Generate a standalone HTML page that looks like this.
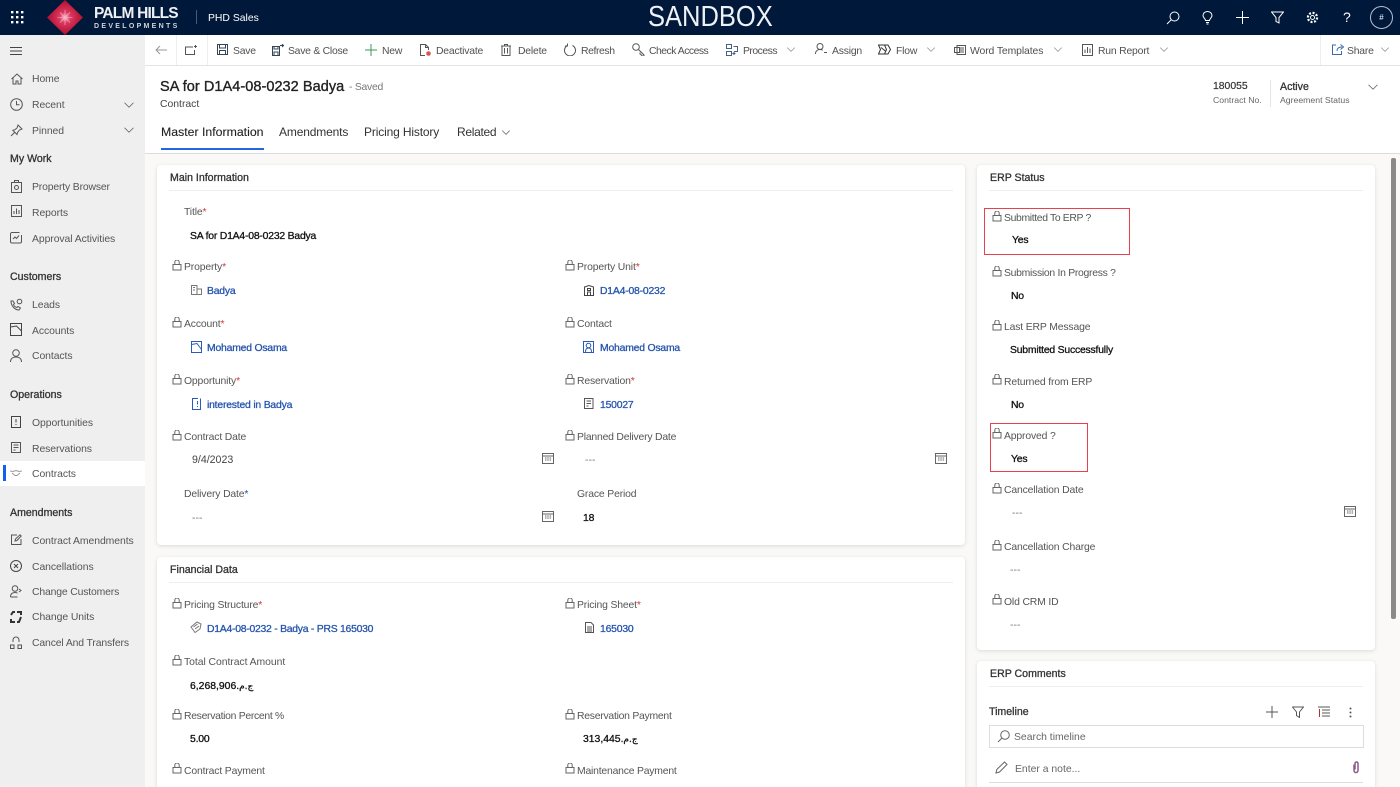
<!DOCTYPE html>
<html lang="en"><head><meta charset="utf-8"><title>SA for D1A4-08-0232 Badya - Contract</title>
<style>
html,body{margin:0;padding:0;width:1400px;height:787px;overflow:hidden;background:#faf9f8;font-family:"Liberation Sans",sans-serif;color:#333}
#p{position:relative;width:1400px;height:787px;overflow:hidden;background:#faf9f8}
.a,.t,svg.i{position:absolute}
.t{white-space:nowrap;line-height:14px;font-size:10.5px;margin-top:1px}
svg.i{fill:none;stroke:#555;stroke-width:1}
.nav{color:#555;left:32px;font-size:10.4px;letter-spacing:-.06px;margin-top:2px}
.sec{color:#333;left:10px;font-size:10.6px;-webkit-text-stroke:.3px #333}
.cmd{color:#505050;font-size:10.4px;letter-spacing:-.2px;margin-top:2px}
.lb{color:#555;font-size:10.4px;letter-spacing:-.15px;margin-top:2px}
.lb b{color:#d13438;font-weight:normal}
.v{color:#111;font-size:10.4px;-webkit-text-stroke:.3px #111;letter-spacing:-.2px;margin-top:2px}
.l{color:#2655ad;font-size:10.4px;-webkit-text-stroke:.3px #2655ad;letter-spacing:-.2px;margin-top:2px}
.h{color:#333;font-size:10.6px;-webkit-text-stroke:.3px #333}
.tab{font-size:12px;color:#333;letter-spacing:-.15px}
.card{position:absolute;background:#fff;border-radius:4px;box-shadow:0 1px 4px rgba(0,0,0,.13)}
.rule{position:absolute;height:1px;background:#eeeeee}
.red{position:absolute;border:1px solid #e8404f;box-sizing:border-box}
</style></head><body><div id="p">
<svg width="0" height="0" style="position:absolute"><defs>
<symbol id="lock" viewBox="0 1 10 12"><path d="M1 5.500h8v5.500H1zM2.800 5.500V3.200a2.200 2.200 0 0 1 4.400 0v2.300"/></symbol>
<symbol id="chev" viewBox="0 0 14 8"><path d="M1 1l6 6 6-6"/></symbol>
<symbol id="cal" viewBox="0 0 12 12"><path d="M.5 1.500h11v10H.500zM.5 4h11M3 6h1.500M5.300 6h1.500M7.600 6h1.500M3 8h1.500M5.300 8h1.500M7.600 8h1.500"/></symbol>
</defs></svg>

<!-- top bar -->
<div class="a" style="left:0;top:0;width:1400px;height:35px;background:#00183a"></div>
<svg class="i" style="left:11px;top:11px;stroke:none;fill:#fff" width="13" height="13" viewBox="0 0 13 13"><path d="M0 0h2.400v2.400H0zM5 0h2.400v2.400H5zM10 0h2.400v2.400H10zM0 5h2.400v2.400H0zM5 5h2.400v2.400H5zM10 5h2.400v2.400H10zM0 10h2.400v2.400H0zM5 10h2.400v2.400H5zM10 10h2.400v2.400H10z"/></svg>
<svg class="i" style="left:47px;top:0;stroke:none" width="36" height="35" viewBox="0 0 36 35"><defs><radialGradient id="g"><stop offset="0" stop-color="#f7c6d4"/><stop offset=".3" stop-color="#dc3a63"/><stop offset=".7" stop-color="#c41f42"/><stop offset="1" stop-color="#a9152f"/></radialGradient></defs><path fill="url(#g)" d="M18 0l18 17.500L18 35 0 17.500z"/><path stroke="#f6b6c8" stroke-width=".6" d="M18 10v15M10.500 17.500h15M13 12.500l10 10M23 12.500l-10 10"/></svg>
<div class="t" style="left:94px;top:5px;font-size:15.5px;line-height:16px;color:#eef0f4;font-weight:bold;letter-spacing:-.8px">PALM HILLS</div>
<div class="t" style="left:94px;top:21px;font-size:7px;line-height:9px;color:#cfd3da;font-weight:bold;letter-spacing:2.300px">DEVELOPMENTS</div>
<div class="a" style="left:196px;top:10px;width:1px;height:14px;background:#4a5a74"></div>
<div class="t" style="left:208px;top:11px;color:#fff;font-size:10.4px">PHD Sales</div>
<div class="t" style="left:648px;top:0;font-size:29px;line-height:33px;color:#eef1f5;transform:scaleX(.88);transform-origin:left">SANDBOX</div>
<svg class="i" style="left:1166px;top:11px;stroke:#fff" width="14" height="14" viewBox="0 0 14 14"><circle cx="8.500" cy="5.500" r="4.500"/><path d="M5.300 8.700L1 13"/></svg>
<svg class="i" style="left:1202px;top:11px;stroke:#fff" width="11" height="14" viewBox="0 0 11 14"><path d="M3.500 9.500C3.500 7.500 1 7 1 4.500a4.500 4 0 0 1 9 0C10 7 7.500 7.500 7.500 9.500zM4 11.500h3M4.500 13h2"/></svg>
<svg class="i" style="left:1236px;top:11px;stroke:#fff" width="13" height="13" viewBox="0 0 13 13"><path d="M6.500 0v13M0 6.500h13"/></svg>
<svg class="i" style="left:1271px;top:11px;stroke:#fff" width="13" height="13" viewBox="0 0 13 13"><path d="M.5 1h12L8 6.500V12L5 10.500v-4z"/></svg>
<svg class="i" style="left:1306px;top:11px;stroke:#fff" width="13" height="13" viewBox="0 0 13 13"><circle cx="6.500" cy="6.500" r="2"/><circle cx="6.500" cy="6.500" r="4.600" stroke-width="2.200" stroke-dasharray="2 1.600"/></svg>
<div class="t" style="left:1343px;top:9px;color:#fff;font-size:14px;line-height:15px">?</div>
<div class="a" style="left:1370px;top:6px;width:21px;height:21px;border:1px solid #b8c0cc;border-radius:50%;color:#fff;font-size:8px;line-height:21px;text-align:center">#</div>

<!-- sidebar -->
<div class="a" style="left:0;top:35px;width:145px;height:752px;background:#efefef"></div>
<svg class="i" style="left:10px;top:47px;stroke:#444" width="12" height="8" viewBox="0 0 12 8"><path d="M0 .5h12M0 4h12M0 7.500h12"/></svg>
<svg class="i" style="left:11px;top:73px" width="12" height="12" viewBox="0 0 12 12"><path d="M.5 6L6 1l5.500 5M2 5v6h3V8h2v3h3V5"/></svg>
<div class="t nav" style="top:71px">Home</div>
<svg class="i" style="left:10px;top:98px" width="13" height="13" viewBox="0 0 13 13"><circle cx="6.500" cy="6.500" r="5.800"/><path d="M6.500 3v3.800h3"/></svg>
<div class="t nav" style="top:97px">Recent</div>
<svg class="i" style="left:123px;top:102px" width="12" height="6"><use href="#chev"/></svg>
<svg class="i" style="left:10px;top:124px" width="13" height="13" viewBox="0 0 13 13"><path d="M8 1l4 4-2.500 1-2 2.500-.5 2L2.800 6.300l2-.5L7 4zM4.500 8.500L1 12"/></svg>
<div class="t nav" style="top:123px">Pinned</div>
<svg class="i" style="left:123px;top:127px" width="12" height="6"><use href="#chev"/></svg>
<div class="t sec" style="top:151px">My Work</div>
<svg class="i" style="left:11px;top:180px" width="11" height="13" viewBox="0 0 11 13"><path d="M.5 2.500h10v10H.500zM3.500 2.500V.5h4v2"/><circle cx="5.500" cy="7.500" r="2"/></svg>
<div class="t nav" style="top:179px;letter-spacing:-.15px">Property Browser</div>
<svg class="i" style="left:10px;top:205px" width="13" height="12" viewBox="0 0 13 12"><path d="M1.500.5h10v11h-10zM4 9V6M6.500 9V3.500M9 9V5"/></svg>
<div class="t nav" style="top:205px">Reports</div>
<svg class="i" style="left:10px;top:231px" width="13" height="13" viewBox="0 0 13 13"><path d="M9.500 1.500H2a1.500 1.500 0 0 0-1.500 1.500v7.500A1.500 1.500 0 0 0 2 12h8a1.500 1.500 0 0 0 1.500-1.500V4M3 8l2-2 1.500 1.500L9 4.500"/></svg>
<div class="t nav" style="top:231px">Approval Activities</div>
<div class="t sec" style="top:269px">Customers</div>
<svg class="i" style="left:10px;top:298px" width="13" height="13" viewBox="0 0 13 13"><path d="M1 3c0 5 4 9 8 9l1.500-2-2.500-1.500-1 1C5 9 4 8 3.500 6.500l1-1L3 3z"/><circle cx="9.500" cy="3.500" r="2.300"/></svg>
<div class="t nav" style="top:297px">Leads</div>
<svg class="i" style="left:10px;top:323px;stroke:#444" width="12" height="13" viewBox="0 0 12 13"><path d="M.5.500h11v12H.500zM.5 4l6-1 5 5"/></svg>
<div class="t nav" style="top:323px">Accounts</div>
<svg class="i" style="left:10px;top:349px" width="12" height="13" viewBox="0 0 12 13"><circle cx="6" cy="4" r="3.300"/><path d="M.5 13c0-3 2-5 5.500-5s5.500 2 5.500 5"/></svg>
<div class="t nav" style="top:348px">Contacts</div>
<div class="t sec" style="top:387px">Operations</div>
<svg class="i" style="left:11px;top:416px;stroke:#444" width="10" height="12" viewBox="0 0 10 12"><path d="M.5.500h9v11h-9zM5 3v3.500M5 8v1"/></svg>
<div class="t nav" style="top:415px">Opportunities</div>
<svg class="i" style="left:11px;top:442px" width="11" height="11" viewBox="0 0 11 11"><path d="M.5.500h9v10h-9zM2.500 3h5M2.500 5.500h5M2.500 8h2"/></svg>
<div class="t nav" style="top:441px">Reservations</div>
<div class="a" style="left:0;top:461px;width:145px;height:25px;background:#fff"></div>
<div class="a" style="left:3px;top:465px;width:2.500px;height:16px;background:#1160f0"></div>
<svg class="i" style="left:10px;top:470px;stroke:#999" width="12" height="6" viewBox="0 0 12 6"><path d="M0 1l3 .5 3-1 3 1 3-.5M2 3l3 2.500h2L10 3"/></svg>
<div class="t nav" style="top:466px">Contracts</div>
<div class="t sec" style="top:505px">Amendments</div>
<svg class="i" style="left:11px;top:534px" width="11" height="11" viewBox="0 0 11 11"><path d="M6 1H.5v9.500H10V5M4 7l.5-2L9 .8l1.200 1.200-4.200 4.500z"/></svg>
<div class="t nav" style="top:533px">Contract Amendments</div>
<svg class="i" style="left:10px;top:560px;stroke:#444" width="12" height="12" viewBox="0 0 12 12"><circle cx="6" cy="6" r="5.500"/><path d="M4 4l4 4M8 4l-4 4"/></svg>
<div class="t nav" style="top:559px">Cancellations</div>
<svg class="i" style="left:10px;top:585px" width="12" height="13" viewBox="0 0 12 13"><circle cx="5" cy="3.500" r="2.800"/><path d="M.5 12c0-3 1.500-4.500 4.500-4.500 1 0 2 .2 2.500.8M.5 12h7M9 4l2 1.500L9 7"/></svg>
<div class="t nav" style="top:584px;letter-spacing:-.15px">Change Customers</div>
<svg class="i" style="left:10px;top:611px;stroke:#333;stroke-width:2" width="12" height="12" viewBox="0 0 12 12"><path d="M5 1H3L1 4M7 1h4v3M11 6L9 11H7M5 11H1V8"/></svg>
<div class="t nav" style="top:609px">Change Units</div>
<svg class="i" style="left:10px;top:636px" width="12" height="13" viewBox="0 0 12 13"><path d="M3 6V4a3 3 0 0 1 6 0v2M.5 12.500V9h3.500v3.500zM8 12.500V9h3.500v3.500z"/></svg>
<div class="t nav" style="top:635px;letter-spacing:-.12px">Cancel And Transfers</div>

<!-- command bar -->
<div class="a" style="left:145px;top:35px;width:1255px;height:30px;background:#fff;border-bottom:1px solid #e3e3e3"></div>
<div class="a" style="left:176px;top:35px;width:1px;height:30px;background:#eee"></div>
<div class="a" style="left:207px;top:35px;width:1px;height:30px;background:#eee"></div>
<div class="a" style="left:1320px;top:35px;width:1px;height:30px;background:#eee"></div>
<svg class="i" style="left:155px;top:45px;stroke:#999" width="12" height="10" viewBox="0 0 12 10"><path d="M12 5H1M5 1L1 5l4 4"/></svg>
<svg class="i" style="left:185px;top:45px" width="12" height="10" viewBox="0 0 12 10"><path d="M8 2H.5v7.500h9V5M10.500 0v3M9 1.500h3"/></svg>
<svg class="i" style="left:217px;top:44px;stroke:#345" width="11" height="11" viewBox="0 0 11 11"><path d="M.5.500h10v10h-10zM2.500.5v3.500h6V.5M2.500 10.500V6.500h6v4" /></svg>
<div class="t cmd" style="left:233px;top:43px">Save</div>
<svg class="i" style="left:272px;top:44px;stroke:#345" width="12" height="12" viewBox="0 0 12 12"><path d="M.5 2.500h7v9h-7zM2 2.500V5h4V2.500M2 11.500V8h4v3.500M8 1.500h3.500M10 0l1.500 1.500L10 3"/></svg>
<div class="t cmd" style="left:288px;top:43px;letter-spacing:-.25px">Save &amp; Close</div>
<svg class="i" style="left:365px;top:44px;stroke:#3c9a55" width="12" height="12" viewBox="0 0 12 12"><path d="M6 0v12M0 6h12"/></svg>
<div class="t cmd" style="left:382px;top:43px">New</div>
<svg class="i" style="left:420px;top:44px" width="11" height="12" viewBox="0 0 11 12"><path d="M5 11.500H.5V.5h5l3 3V6M5.500.5v3h3"/><circle cx="8.500" cy="9.500" r="2.300" fill="#d9534f" stroke="none"/></svg>
<div class="t cmd" style="left:436px;top:43px">Deactivate</div>
<svg class="i" style="left:501px;top:44px" width="10" height="12" viewBox="0 0 10 12"><path d="M0 2h10M3.500 2V.5h3V2M1 2v9.500h8V2M3.500 4v5.500M6.500 4v5.500"/></svg>
<div class="t cmd" style="left:518px;top:43px">Delete</div>
<svg class="i" style="left:564px;top:43px" width="12" height="13" viewBox="0 0 12 13"><path d="M3.500 2.500a5.500 5.500 0 1 0 5 0M3.500 .5v2.500H1"/></svg>
<div class="t cmd" style="left:581px;top:43px;letter-spacing:-.4px">Refresh</div>
<svg class="i" style="left:632px;top:43px" width="13" height="13" viewBox="0 0 13 13"><circle cx="4" cy="4" r="3.300"/><path d="M6.500 6.500L12 12v1h-2l-1-1.500-1-.5v-1.500"/></svg>
<div class="t cmd" style="left:649px;top:43px;letter-spacing:-.5px">Check Access</div>
<svg class="i" style="left:726px;top:44px" width="12" height="12" viewBox="0 0 12 12"><path d="M.5.500h5v4h-5zM.5 7.500h5v4h-5zM7.500 2.500h4v5H8M9.500 9.500H7l1.500-1.300M7 9.500l1.500 1.300" stroke="#47617f"/></svg>
<div class="t cmd" style="left:743px;top:43px;letter-spacing:-.5px">Process</div>
<svg class="i" style="left:786px;top:47px;stroke:#888" width="10" height="5"><use href="#chev"/></svg>
<svg class="i" style="left:815px;top:43px" width="12" height="12" viewBox="0 0 12 12"><circle cx="5" cy="3.500" r="3"/><path d="M.5 11c0-3 2-4.500 4.500-4.500 1 0 2 .2 2.700.8M9 9.500h3" /></svg>
<div class="t cmd" style="left:832px;top:43px">Assign</div>
<svg class="i" style="left:878px;top:44px;stroke:#333" width="13" height="11" viewBox="0 0 13 11"><path d="M.5 1h6l2 4.500-2 4.500h-6l2-4.500zM6 1h4l2.500 4.500L10 10H6M3 3.500l5 4"/></svg>
<div class="t cmd" style="left:896px;top:43px">Flow</div>
<svg class="i" style="left:926px;top:47px;stroke:#888" width="10" height="5"><use href="#chev"/></svg>
<svg class="i" style="left:954px;top:45px" width="12" height="10" viewBox="0 0 12 10"><path d="M3 .5h8.500v9H3zM.5 2.500h5v5h-5zM6 3h4M6 5h4M6 7h4"/></svg>
<div class="t cmd" style="left:970px;top:43px;letter-spacing:-.1px">Word Templates</div>
<svg class="i" style="left:1053px;top:47px;stroke:#888" width="10" height="5"><use href="#chev"/></svg>
<svg class="i" style="left:1082px;top:44px" width="11" height="12" viewBox="0 0 11 12"><path d="M.5.500h10v11H.500zM3 9V5.500M5.500 9V3M8 9V4.500"/></svg>
<div class="t cmd" style="left:1098px;top:43px">Run Report</div>
<svg class="i" style="left:1159px;top:47px;stroke:#888" width="10" height="5"><use href="#chev"/></svg>
<svg class="i" style="left:1332px;top:44px;stroke:#3a6aa8" width="12" height="11" viewBox="0 0 12 11"><path d="M4 1H.5v9.500h9V7M5 7c0-3 2-4 5-4M8.500 .5L11.500 3l-3 2.500"/></svg>
<div class="t cmd" style="left:1347px;top:43px">Share</div>
<svg class="i" style="left:1380px;top:47px;stroke:#888" width="10" height="5"><use href="#chev"/></svg>

<!-- record header -->
<div class="a" style="left:145px;top:66px;width:1255px;height:87px;background:#fff;border-bottom:1px solid #dcdcdc"></div>
<div class="t" style="left:160px;top:78px;font-size:14.500px;line-height:17px;color:#222;-webkit-text-stroke:.35px #222;letter-spacing:.05px">SA for D1A4-08-0232 Badya</div>
<div class="t" style="left:349px;top:80px;color:#777;font-size:10.4px;letter-spacing:-.25px">- Saved</div>
<div class="t" style="left:160px;top:97px;color:#444;font-size:10.4px">Contract</div>
<div class="t" style="left:1213px;top:79px;color:#333;font-size:10.4px;-webkit-text-stroke:.2px #333">180055</div>
<div class="t" style="left:1213px;top:92px;color:#666;font-size:8.700px">Contract No.</div>
<div class="a" style="left:1270px;top:80px;width:1px;height:27px;background:#e5e5e5"></div>
<div class="t" style="left:1280px;top:79px;color:#333;font-size:10.6px;-webkit-text-stroke:.3px #333">Active</div>
<div class="t" style="left:1280px;top:92px;color:#666;font-size:8.700px">Agreement Status</div>
<svg class="i" style="left:1367px;top:84px" width="12" height="6"><use href="#chev"/></svg>
<div class="t" style="left:161px;top:124px;font-size:12.300px;color:#222;-webkit-text-stroke:.1px #222">Master Information</div>
<div class="a" style="left:161px;top:148px;width:103px;height:2px;background:#2266e3"></div>
<div class="t tab" style="left:279px;top:124px">Amendments</div>
<div class="t tab" style="left:364px;top:124px">Pricing History</div>
<div class="t tab" style="left:457px;top:124px;letter-spacing:-.3px">Related</div>
<svg class="i" style="left:501px;top:130px" width="10" height="5"><use href="#chev"/></svg>

<!-- main card -->
<div class="card" style="left:157px;top:165px;width:808px;height:380px"></div>
<div class="t h" style="left:170px;top:170px">Main Information</div>
<div class="rule" style="left:169px;top:190px;width:784px"></div>
<div class="t lb" style="left:184px;top:204px">Title<b>*</b></div>
<div class="t v" style="left:190px;top:228px">SA for D1A4-08-0232 Badya</div>

<svg class="i" style="left:172px;top:260px;stroke:#666" width="10" height="12"><use href="#lock"/></svg>
<div class="t lb" style="left:184px;top:259px">Property<b>*</b></div>
<svg class="i" style="left:191px;top:285px;stroke:#777" width="11" height="10" viewBox="0 0 11 10"><path d="M.5 9.500V.5h5.500v9zM6 4h4.500v5.500H6M2 2.500h2M2 5h2M0 9.500h11"/></svg>
<div class="t l" style="left:207px;top:283px">Badya</div>
<svg class="i" style="left:565px;top:260px;stroke:#666" width="10" height="12"><use href="#lock"/></svg>
<div class="t lb" style="left:577px;top:259px">Property Unit<b>*</b></div>
<svg class="i" style="left:584px;top:285px;stroke:#444" width="10" height="11" viewBox="0 0 10 11"><path d="M.5 10.500V2L5 .5 9.500 2v8.500zM3.500 10.500V7h3v3.500M3.500 3.500h3v2h-3z"/></svg>
<div class="t l" style="left:600px;top:283px">D1A4-08-0232</div>

<svg class="i" style="left:172px;top:317px;stroke:#666" width="10" height="12"><use href="#lock"/></svg>
<div class="t lb" style="left:184px;top:316px">Account<b>*</b></div>
<svg class="i" style="left:191px;top:341px;stroke:#2a5bb8" width="11" height="12" viewBox="0 0 11 12"><path d="M.5.500h10v11H.500zM.5 3.500l5.500-1 4.500 6"/></svg>
<div class="t l" style="left:207px;top:340px">Mohamed Osama</div>
<svg class="i" style="left:565px;top:317px;stroke:#666" width="10" height="12"><use href="#lock"/></svg>
<div class="t lb" style="left:577px;top:316px">Contact</div>
<svg class="i" style="left:583px;top:341px;stroke:#2a5bb8" width="11" height="12" viewBox="0 0 11 12"><path d="M.5.500h10v11H.500z"/><circle cx="5.500" cy="4.500" r="2.300"/><path d="M2.500 11c0-3 1-4 3-4s3 1 3 4"/></svg>
<div class="t l" style="left:600px;top:340px">Mohamed Osama</div>

<svg class="i" style="left:172px;top:374px;stroke:#666" width="10" height="12"><use href="#lock"/></svg>
<div class="t lb" style="left:184px;top:373px">Opportunity<b>*</b></div>
<svg class="i" style="left:192px;top:398px;stroke:#2a5bb8" width="9" height="12" viewBox="0 0 9 12"><path d="M6 .5H.5v11h8V.5M5.500 3v3.500M5.500 8v1"/></svg>
<div class="t l" style="left:207px;top:397px">interested in Badya</div>
<svg class="i" style="left:565px;top:374px;stroke:#666" width="10" height="12"><use href="#lock"/></svg>
<div class="t lb" style="left:577px;top:373px">Reservation<b>*</b></div>
<svg class="i" style="left:584px;top:398px;stroke:#555" width="10" height="11" viewBox="0 0 10 11"><path d="M.5.500h8.500v10H.500zM2.500 3h4.500M2.500 5.500h4.500M2.500 8h2"/></svg>
<div class="t l" style="left:600px;top:397px">150027</div>

<svg class="i" style="left:172px;top:430px;stroke:#666" width="10" height="12"><use href="#lock"/></svg>
<div class="t lb" style="left:184px;top:429px">Contract Date</div>
<div class="t" style="left:192px;top:452px;color:#444;font-size:10.600px">9/4/2023</div>
<svg class="i" style="left:542px;top:452px;stroke:#666" width="12" height="12"><use href="#cal"/></svg>
<svg class="i" style="left:565px;top:430px;stroke:#666" width="10" height="12"><use href="#lock"/></svg>
<div class="t lb" style="left:577px;top:429px;letter-spacing:-.2px">Planned Delivery Date</div>
<div class="t" style="left:585px;top:452px;color:#777">---</div>
<svg class="i" style="left:935px;top:452px;stroke:#666" width="12" height="12"><use href="#cal"/></svg>

<div class="t lb" style="left:184px;top:486px">Delivery Date<b style="color:#1d4fa5">*</b></div>
<div class="t" style="left:192px;top:510px;color:#777">---</div>
<svg class="i" style="left:542px;top:510px;stroke:#666" width="12" height="12"><use href="#cal"/></svg>
<div class="t lb" style="left:577px;top:486px">Grace Period</div>
<div class="t v" style="left:583px;top:510px">18</div>

<!-- financial card -->
<div class="card" style="left:157px;top:557px;width:808px;height:240px"></div>
<div class="t h" style="left:170px;top:562px">Financial Data</div>
<div class="rule" style="left:169px;top:582px;width:784px"></div>
<svg class="i" style="left:172px;top:598px;stroke:#666" width="10" height="12"><use href="#lock"/></svg>
<div class="t lb" style="left:184px;top:597px">Pricing Structure<b>*</b></div>
<svg class="i" style="left:190px;top:621px;stroke:#777" width="12" height="12" viewBox="0 0 12 12"><path d="M1 6l6-5 4 2-1 5-5 3.500zM3.500 6l4-3M5 8l4-3"/></svg>
<div class="t l" style="left:207px;top:621px;letter-spacing:-.25px">D1A4-08-0232 - Badya - PRS 165030</div>
<svg class="i" style="left:565px;top:598px;stroke:#666" width="10" height="12"><use href="#lock"/></svg>
<div class="t lb" style="left:577px;top:597px">Pricing Sheet<b>*</b></div>
<svg class="i" style="left:585px;top:622px;stroke:#555" width="9" height="11" viewBox="0 0 9 11"><path d="M.5.500H6L8.500 3v7.500h-8zM2 5h5M2 7h5M2 9h5"/></svg>
<div class="t l" style="left:600px;top:621px">165030</div>
<svg class="i" style="left:172px;top:655px;stroke:#666" width="10" height="12"><use href="#lock"/></svg>
<div class="t lb" style="left:184px;top:654px;letter-spacing:-.05px">Total Contract Amount</div>
<div class="t v" style="left:190px;top:678px">6,268,906<span style="font-family:'DejaVu Sans',sans-serif;font-size:9px" dir="rtl">ج.م.</span></div>
<svg class="i" style="left:172px;top:709px;stroke:#666" width="10" height="12"><use href="#lock"/></svg>
<div class="t lb" style="left:184px;top:708px;letter-spacing:-.3px">Reservation Percent %</div>
<div class="t v" style="left:190px;top:731px">5.00</div>
<svg class="i" style="left:565px;top:709px;stroke:#666" width="10" height="12"><use href="#lock"/></svg>
<div class="t lb" style="left:577px;top:708px;letter-spacing:-.25px">Reservation Payment</div>
<div class="t v" style="left:583px;top:731px">313,445<span style="font-family:'DejaVu Sans',sans-serif;font-size:9px" dir="rtl">ج.م.</span></div>
<svg class="i" style="left:172px;top:763px;stroke:#666" width="10" height="12"><use href="#lock"/></svg>
<div class="t lb" style="left:184px;top:763px">Contract Payment</div>
<svg class="i" style="left:565px;top:763px;stroke:#666" width="10" height="12"><use href="#lock"/></svg>
<div class="t lb" style="left:577px;top:763px;letter-spacing:-.2px">Maintenance Payment</div>

<!-- ERP status -->
<div class="card" style="left:977px;top:165px;width:398px;height:485px"></div>
<div class="t h" style="left:990px;top:170px">ERP Status</div>
<div class="rule" style="left:989px;top:190px;width:374px"></div>
<div class="red" style="left:984px;top:208px;width:146px;height:47px"></div>
<svg class="i" style="left:992px;top:211px;stroke:#666" width="10" height="12"><use href="#lock"/></svg>
<div class="t lb" style="left:1004px;top:210px;letter-spacing:-.35px">Submitted To ERP ?</div>
<div class="t v" style="left:1012px;top:232px">Yes</div>
<svg class="i" style="left:992px;top:266px;stroke:#666" width="10" height="12"><use href="#lock"/></svg>
<div class="t lb" style="left:1004px;top:265px;letter-spacing:-.28px">Submission In Progress ?</div>
<div class="t v" style="left:1011px;top:288px">No</div>
<svg class="i" style="left:992px;top:320px;stroke:#666" width="10" height="12"><use href="#lock"/></svg>
<div class="t lb" style="left:1004px;top:319px">Last ERP Message</div>
<div class="t v" style="left:1010px;top:342px">Submitted Successfully</div>
<svg class="i" style="left:992px;top:374px;stroke:#666" width="10" height="12"><use href="#lock"/></svg>
<div class="t lb" style="left:1004px;top:374px">Returned from ERP</div>
<div class="t v" style="left:1011px;top:397px">No</div>
<div class="red" style="left:990px;top:423px;width:98px;height:49px"></div>
<svg class="i" style="left:992px;top:428px;stroke:#666" width="10" height="12"><use href="#lock"/></svg>
<div class="t lb" style="left:1004px;top:428px">Approved ?</div>
<div class="t v" style="left:1011px;top:451px">Yes</div>
<svg class="i" style="left:992px;top:483px;stroke:#666" width="10" height="12"><use href="#lock"/></svg>
<div class="t lb" style="left:1004px;top:482px">Cancellation Date</div>
<div class="t" style="left:1012px;top:505px;color:#777">---</div>
<svg class="i" style="left:1344px;top:505px;stroke:#666" width="12" height="12"><use href="#cal"/></svg>
<svg class="i" style="left:992px;top:540px;stroke:#666" width="10" height="12"><use href="#lock"/></svg>
<div class="t lb" style="left:1004px;top:539px">Cancellation Charge</div>
<div class="t" style="left:1010px;top:562px;color:#777">---</div>
<svg class="i" style="left:992px;top:594px;stroke:#666" width="10" height="12"><use href="#lock"/></svg>
<div class="t lb" style="left:1004px;top:594px">Old CRM ID</div>
<div class="t" style="left:1010px;top:617px;color:#777">---</div>

<!-- ERP comments -->
<div class="card" style="left:977px;top:661px;width:398px;height:136px"></div>
<div class="t h" style="left:990px;top:666px">ERP Comments</div>
<div class="rule" style="left:989px;top:686px;width:374px"></div>
<div class="t h" style="left:989px;top:704px">Timeline</div>
<svg class="i" style="left:1266px;top:706px" width="12" height="12" viewBox="0 0 12 12"><path d="M6 0v12M0 6h12"/></svg>
<svg class="i" style="left:1292px;top:706px" width="12" height="12" viewBox="0 0 12 12"><path d="M.5 1h11L7.500 6v5.500l-3-2V6z"/></svg>
<svg class="i" style="left:1318px;top:706px" width="12" height="12" viewBox="0 0 12 12"><path d="M0 1h12M4 4h8M4 7h8M4 10h8"/><path d="M1.500 3v8" stroke="#a33"/></svg>
<svg class="i" style="left:1349px;top:707px;stroke:none;fill:#555" width="3" height="11" viewBox="0 0 3 11"><circle cx="1.500" cy="1.500" r="1"/><circle cx="1.500" cy="5.500" r="1"/><circle cx="1.500" cy="9.500" r="1"/></svg>
<div class="a" style="left:989px;top:725px;width:373px;height:21px;border:1px solid #ddd;background:#fff"></div>
<svg class="i" style="left:997px;top:730px;stroke:#666" width="13" height="13" viewBox="0 0 13 13"><circle cx="8" cy="5" r="4.300"/><path d="M5 8l-4 4"/></svg>
<div class="t" style="left:1014px;top:730px;color:#666;font-size:10.4px">Search timeline</div>
<svg class="i" style="left:995px;top:761px;stroke:#666" width="13" height="13" viewBox="0 0 13 13"><path d="M1 12l.8-3.500L9.500 1l2.500 2.500L4.500 11z"/></svg>
<div class="t" style="left:1015px;top:762px;color:#666;font-size:10.4px">Enter a note...</div>
<svg class="i" style="left:1352px;top:761px;stroke:#8a5a8a;stroke-width:1.500" width="8" height="13" viewBox="0 0 8 13"><path d="M2 3.500v6a2 2 0 0 0 4 0v-7a1.500 1.500 0 0 0-3 0v6"/></svg>
<div class="a" style="left:989px;top:782px;width:374px;height:1px;background:#ddd"></div>

<!-- scrollbar -->
<div class="a" style="left:1391px;top:158px;width:5px;height:461px;background:#8a8a8a;border-radius:2px"></div>
</div></body></html>
